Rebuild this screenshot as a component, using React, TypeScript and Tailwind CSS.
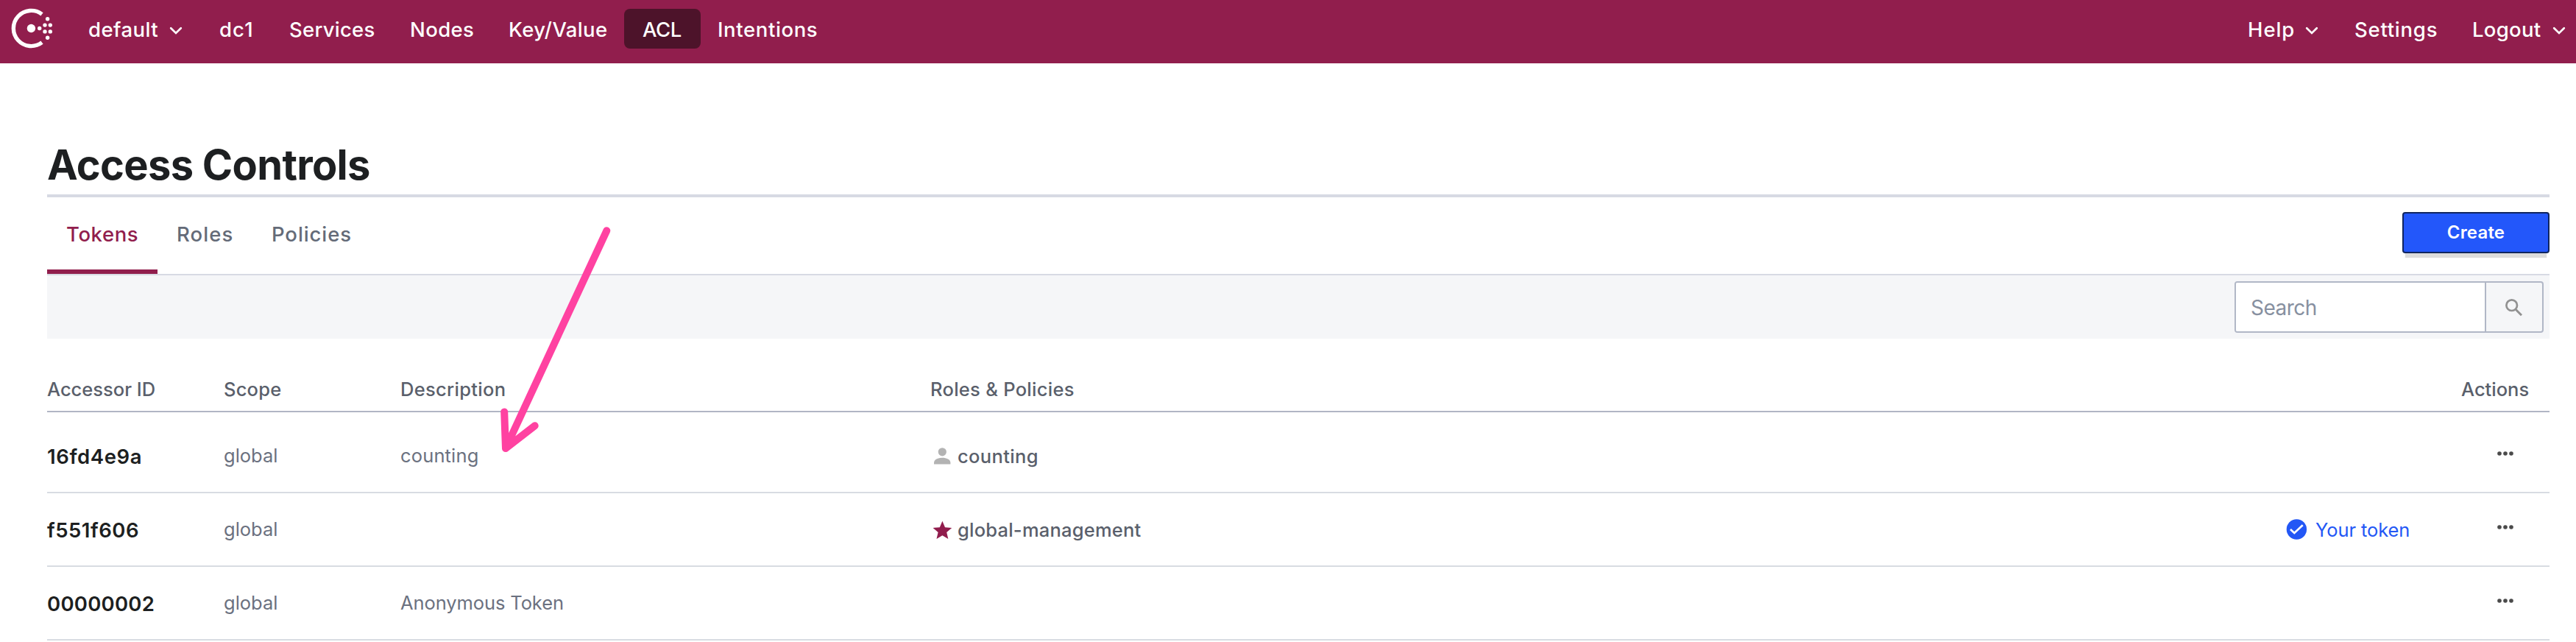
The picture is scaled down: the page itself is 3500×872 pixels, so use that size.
const tokens = [
  { id: "16fd4e9a", idTracking: "tracking-[0.6px]", description: "counting", descriptionTracking: "tracking-[0.15px]", role: "counting", roleTracking: "tracking-[0.36px]", kind: "role", mine: false },
  { id: "f551f606", idTracking: "tracking-[0.52px]", description: "", descriptionTracking: "", role: "global-management", roleTracking: "tracking-[0.22px]", kind: "management", mine: true },
  { id: "00000002", idTracking: "tracking-[0.24px]", description: "Anonymous Token", descriptionTracking: "tracking-[-0.1px]", role: "", roleTracking: "", kind: "", mine: false },
];

const rowGrid = "grid grid-cols-[240px_240px_720px_1fr_240px_120px]";

function ConsulLogo() {
  return (
    <svg viewBox="0 0 96 86" className="h-[86px] w-[96px] shrink-0" fill="white">
      <path d="M57 19.3A24.1 24.1 0 1 0 57 57.7" fill="none" stroke="white" strokeWidth="5.4" />
      <circle cx="42.4" cy="38.5" r="5.7" />
      <circle cx="53.7" cy="38.5" r="2.7" />
      <circle cx="61" cy="34.1" r="2.7" />
      <circle cx="68.3" cy="34.1" r="2.7" />
      <circle cx="61" cy="42.9" r="2.7" />
      <circle cx="68.3" cy="42.9" r="2.7" />
      <circle cx="64.6" cy="25.7" r="2.7" />
      <circle cx="64.6" cy="51.3" r="2.7" />
    </svg>
  );
}

function Chevron() {
  return (
    <svg viewBox="0 0 18 12" className="mt-[4px] h-[12px] w-[18px] shrink-0" fill="none" stroke="white" strokeWidth="2.7">
      <path d="M2.2 2.2L9 8.9L15.8 2.2" strokeLinecap="round" />
    </svg>
  );
}

function RoleIcon({ kind }: { kind: string }) {
  return (
    <svg viewBox="0 0 37 30" className="h-[30px] w-[37px] shrink-0">
      {kind === "role" ? (
        <g fill="#b3b3b3">
          <circle cx="16.3" cy="8.8" r="5.6" />
          <path d="M5 23.6C5 18.8 10.6 16.7 16.2 16.7S27.4 18.8 27.4 23.6V25.4H5Z" />
        </g>
      ) : (
        <path
          transform="translate(1.04 .14) scale(1.28)"
          fill="#911d4d"
          d="M12 17.27L18.18 21l-1.64-7.03L22 9.24l-7.19-.61L12 2 9.19 8.63 2 9.24l5.46 4.73L5.82 21z"
        />
      )}
    </svg>
  );
}

export default function App() {
  return (
    <div className="relative h-[872px] w-[3500px] overflow-hidden bg-white font-['Inter',sans-serif]">
      <header className="flex h-[86px] bg-[#911e4d] text-[27.5px] leading-[52px] font-medium text-white">
        <ConsulLogo />
        <nav className="flex h-[66px] flex-1 pt-3">
          <div className="flex w-[176px] items-center pt-[2px] pl-6">
            <span className="w-[110px] tracking-[0.45px]">default</span>
            <Chevron />
          </div>
          <a className="w-[96px] pt-[2px] pl-[26px] tracking-[1.1px]">dc1</a>
          <a className="w-[165px] pt-[2px] pl-[25px] tracking-[0.24px]">Services</a>
          <a className="w-[134px] pt-[2px] pl-[24px] tracking-[0.38px]">Nodes</a>
          <a className="w-[181px] pt-[2px] pl-[24px] tracking-[0.36px]">Key/Value</a>
          <a className="w-[104px] rounded-lg bg-[#4d132a] pt-[2px] pl-[25px] tracking-[-0.43px]">ACL</a>
          <a className="pt-[2px] pl-[23px] tracking-[0.62px]">Intentions</a>
          <div className="ml-auto flex w-[147px] items-center pt-[2px] pl-[25px]">
            <span className="w-[78px] tracking-[0.91px]">Help</span>
            <Chevron />
          </div>
          <a className="w-[160px] pt-[2px] pl-[23px] tracking-[0.75px]">Settings</a>
          <div className="flex w-[164px] items-center pt-[2px] pl-[23px]">
            <span className="w-[109px] tracking-[0.27px]">Logout</span>
            <Chevron />
          </div>
        </nav>
      </header>

      <main className="pt-[106px] pr-9 pl-16">
        <h1 className="border-b-4 border-[#d7dae3] pb-2 text-[56px] leading-[64px] font-bold tracking-[-0.7px] text-[#1d1f21]">
          Access Controls
        </h1>

        <div className="flex h-[106px] border-b-2 border-[#d7dae3] text-[27.5px] leading-[100px] font-medium text-[#646b78]">
          <a className="h-[104px] w-[150px] border-b-[6px] border-[#911e4d] pl-[26px] tracking-[0.59px] text-[#911e4d]">Tokens</a>
          <a className="w-[129px] pl-[26px] tracking-[1.09px]">Roles</a>
          <a className="pl-[26px] tracking-[0.9px]">Policies</a>
          <button className="mt-5 ml-auto h-[56px] w-[200px] rounded-[4px] border-2 border-[#10255f] bg-[#2357fa] pb-[1px] text-[24px] leading-[51px] font-semibold tracking-[0.17px] text-white shadow-[0_10px_1px_-4px_#dcdcdc]">
            Create
          </button>
        </div>

        <div className="flex h-[86px] justify-end bg-[#f5f6f8] pt-2 pr-2">
          <div className="flex h-[70px] w-[420px] overflow-hidden rounded-[4px] border-2 border-[#b1b7c6] bg-[#f5f6f8]">
            <div className="w-[340px] border-r-2 border-[#b1b7c6] bg-white pl-5 text-[28px] leading-[68px] tracking-[-0.5px] text-[#8790a0]">
              Search
            </div>
            <svg viewBox="0 0 76 66" className="h-[66px] w-[76px]" fill="none" stroke="#929292">
              <circle cx="34.7" cy="30.7" r="7.3" strokeWidth="2.7" />
              <path d="M40.3 36.5L48 44.2" strokeWidth="3" />
            </svg>
          </div>
        </div>

        <div className={`${rowGrid} h-[100px] border-b-2 border-[#b1b5c4] pt-[39px] text-[25.5px] leading-[59px] font-medium text-[#5a5f6b]`}>
          <span>Accessor ID</span>
          <span className="tracking-[0.21px]">Scope</span>
          <span className="tracking-[0.3px]">Description</span>
          <span className="tracking-[0.28px]">Roles &amp; Policies</span>
          <span />
          <span>Actions</span>
        </div>

        <div className="pt-[10px] text-[25.5px] leading-[98px] text-[#6b7180]">
          {tokens.map((token) => (
            <div key={token.id} className={`${rowGrid} h-[100px] border-b-2 border-[#d8dce2]`}>
              <span className={`text-[27.5px] leading-[100px] font-semibold text-[#1d1f21] ${token.idTracking}`}>{token.id}</span>
              <span>global</span>
              <span className={token.descriptionTracking}>{token.description}</span>
              <span className="flex items-center font-medium text-[#5a5f6b]">
                {token.role && <RoleIcon kind={token.kind} />}
                <span className={token.roleTracking}>{token.role}</span>
              </span>
              <span className="flex items-center text-[#2357f5]">
                {token.mine && (
                  <>
                    <svg viewBox="0 0 42 28" className="h-[28px] w-[42px] overflow-visible">
                      <circle cx="16.4" cy="13" r="13.7" fill="#2357f5" />
                      <path d="M8 13L13.3 18L24.7 7.3" fill="none" stroke="white" strokeWidth="2.7" />
                    </svg>
                    <span className="tracking-[-0.1px]">Your token</span>
                  </>
                )}
              </span>
              <svg viewBox="0 0 120 98" className="h-[98px] w-[120px]" fill="#4a4a4a">
                <circle cx="52" cy="46" r="2.8" />
                <circle cx="60" cy="46" r="2.8" />
                <circle cx="68" cy="46" r="2.8" />
              </svg>
            </div>
          ))}
        </div>
      </main>

      <svg
        viewBox="0 0 160 316"
        className="pointer-events-none absolute top-[303px] left-[675px] h-[316px] w-[160px]"
        fill="none"
        stroke="#ff42a1"
        strokeWidth="10"
        strokeLinecap="round"
        strokeLinejoin="round"
      >
        <path d="M149.3 10.3L12 306M10.2 256.5L12 306M51.7 275.3L12 306" />
      </svg>
    </div>
  );
}
